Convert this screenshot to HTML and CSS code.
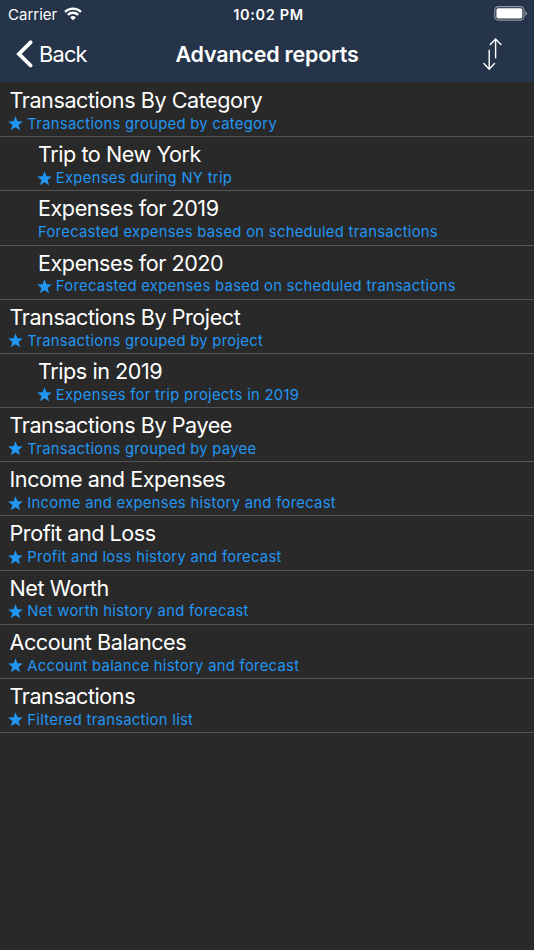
FILE: index.html
```
<!DOCTYPE html>
<html lang="en">

<head>
  <meta charset="utf-8">
  <title>Advanced reports</title>
  <link rel="stylesheet" href="styles.css">
</head>

<body>
  <svg width="0" height="0" class="defs">
    <symbol id="star" viewBox="0 0 14 14">
      <path d="M7 0.2 8.8 4.9 13.8 5.1 9.9 8.3 11.3 13.2 7 10.4 2.7 13.2 4.1 8.3 0.2 5.1 5.2 4.9Z" />
    </symbol>
  </svg>

  <header>
    <div class="status">
      <div class="carrier">
        <span>Carrier</span>
        <svg class="wifi" width="18" height="14" viewBox="0 0 18 14">
          <path d="M1 4.9A11.6 11.6 0 0 1 17 4.9M3.8 7.8A7.6 7.6 0 0 1 14.2 7.8" />
          <path class="dot" d="M9 13.3 6.1 10.4A4.2 4.2 0 0 1 11.9 10.4Z" />
        </svg>
      </div>
      <span class="time">10:02 PM</span>
      <svg class="battery" width="34" height="15" viewBox="0 0 34 15">
        <rect class="outline" x="0.75" y="0.6" width="29.2" height="13.6" rx="3.6" />
        <rect class="level" x="2.4" y="2.3" width="25.9" height="10.2" rx="1.8" />
        <path class="cap" d="M31.4 5V9.8Q33 9 33 7.4T31.4 5Z" />
      </svg>
    </div>
    <div class="nav">
      <div class="back">
        <svg width="17" height="28" viewBox="0 0 17 28">
          <path d="M14.6 2.3 2.9 13.9 14.6 25.5" />
        </svg>
        <span>Back</span>
      </div>
      <h1>Advanced reports</h1>
      <svg class="sort" width="20" height="34" viewBox="0 0 20 34">
        <path d="M12.6 20.7V2M7.3 7.6 12.6 2 17.9 7.6M6.2 13.2V32.2M0.9 26.6 6.2 32.2 11.5 26.6" />
      </svg>
    </div>
  </header>

  <ul class="reports">
    <li>
      <h2>Transactions By Category</h2>
      <p><svg class="star"><use href="#star" /></svg><span>Transactions grouped by category</span></p>
    </li>
    <li class="child">
      <h2>Trip to New York</h2>
      <p><svg class="star"><use href="#star" /></svg><span>Expenses during NY trip</span></p>
    </li>
    <li class="child">
      <h2>Expenses for 2019</h2>
      <p><span>Forecasted expenses based on scheduled transactions</span></p>
    </li>
    <li class="child">
      <h2>Expenses for 2020</h2>
      <p><svg class="star"><use href="#star" /></svg><span>Forecasted expenses based on scheduled transactions</span></p>
    </li>
    <li>
      <h2>Transactions By Project</h2>
      <p><svg class="star"><use href="#star" /></svg><span>Transactions grouped by project</span></p>
    </li>
    <li class="child">
      <h2>Trips in 2019</h2>
      <p><svg class="star"><use href="#star" /></svg><span>Expenses for trip projects in 2019</span></p>
    </li>
    <li>
      <h2>Transactions By Payee</h2>
      <p><svg class="star"><use href="#star" /></svg><span>Transactions grouped by payee</span></p>
    </li>
    <li>
      <h2>Income and Expenses</h2>
      <p><svg class="star"><use href="#star" /></svg><span>Income and expenses history and forecast</span></p>
    </li>
    <li>
      <h2>Profit and Loss</h2>
      <p><svg class="star"><use href="#star" /></svg><span>Profit and loss history and forecast</span></p>
    </li>
    <li>
      <h2>Net Worth</h2>
      <p><svg class="star"><use href="#star" /></svg><span>Net worth history and forecast</span></p>
    </li>
    <li>
      <h2>Account Balances</h2>
      <p><svg class="star"><use href="#star" /></svg><span>Account balance history and forecast</span></p>
    </li>
    <li>
      <h2>Transactions</h2>
      <p><svg class="star"><use href="#star" /></svg><span>Filtered transaction list</span></p>
    </li>
  </ul>
</body>

</html>
```
FILE: styles.css
```
* {
  box-sizing: border-box;
}

body {
  margin: 0;
  min-height: 100vh;
  background: #292929;
  color: #fff;
  font-family: Inter, "Liberation Sans", sans-serif;
}

.defs {
  display: block;
}

h1,
h2,
p,
ul {
  margin: 0;
  padding: 0;
  white-space: nowrap;
}

/* header */
header {
  height: 82.4px;
  background: #253449;
}

.status,
.nav {
  display: grid;
  grid-template-columns: 1fr auto 1fr;
  align-items: center;
}

.status {
  height: 27px;
  padding: 0 6px 0 8px;
  font-size: 15px;
}

.carrier {
  display: flex;
  align-items: center;
  gap: 7px;
}

.carrier span {
  padding-top: 1px;
}

.time {
  padding: 1px 0 0 1px;
  font-weight: 600;
  font-size: 14.5px;
  letter-spacing: 0.65px;
}

.battery,
.sort {
  justify-self: end;
}

.wifi path {
  fill: none;
  stroke: #fff;
  stroke-width: 2.3;
}

.wifi .dot {
  fill: #fff;
  stroke: none;
}

.battery .outline {
  fill: none;
  stroke: #8d95a1;
  stroke-width: 1.2;
}

.battery .level {
  fill: #fff;
}

.battery .cap {
  fill: #8d95a1;
}

.nav {
  height: 54px;
  padding: 0 31px 0 16px;
  grid-template-columns: 159.5px 1fr 20px;
}

.back {
  display: flex;
  align-items: center;
  gap: 6px;
  font-size: 21.8px;
  letter-spacing: -0.8px;
}

.back path {
  fill: none;
  stroke: #fff;
  stroke-width: 3.8;
  stroke-linecap: round;
}

h1 {
  font-size: 21.5px;
  font-weight: 600;
  letter-spacing: -0.2px;
}

.sort path {
  fill: none;
  stroke: #fff;
  stroke-width: 1.4;
  stroke-linecap: round;
}

/* list */
.reports {
  list-style: none;
  padding-top: 0.7px;
}

.reports li {
  height: 54.18px;
  padding: 3px 9.5px 0;
  border-bottom: 1px solid #545454;
}

.reports .child {
  padding-left: 38px;
}

h2 {
  font-size: 21.6px;
  font-weight: 400;
  line-height: 28px;
  letter-spacing: -0.45px;
}

.reports p {
  display: flex;
  align-items: center;
  padding-top: 0.8px;
  color: #2196f3;
  font-size: 14.8px;
  line-height: 19px;
  letter-spacing: 0.29px;
}

.star {
  width: 15px;
  height: 15px;
  margin: -1px 4px 0 -1.2px;
  fill: #2196f3;
}
```
